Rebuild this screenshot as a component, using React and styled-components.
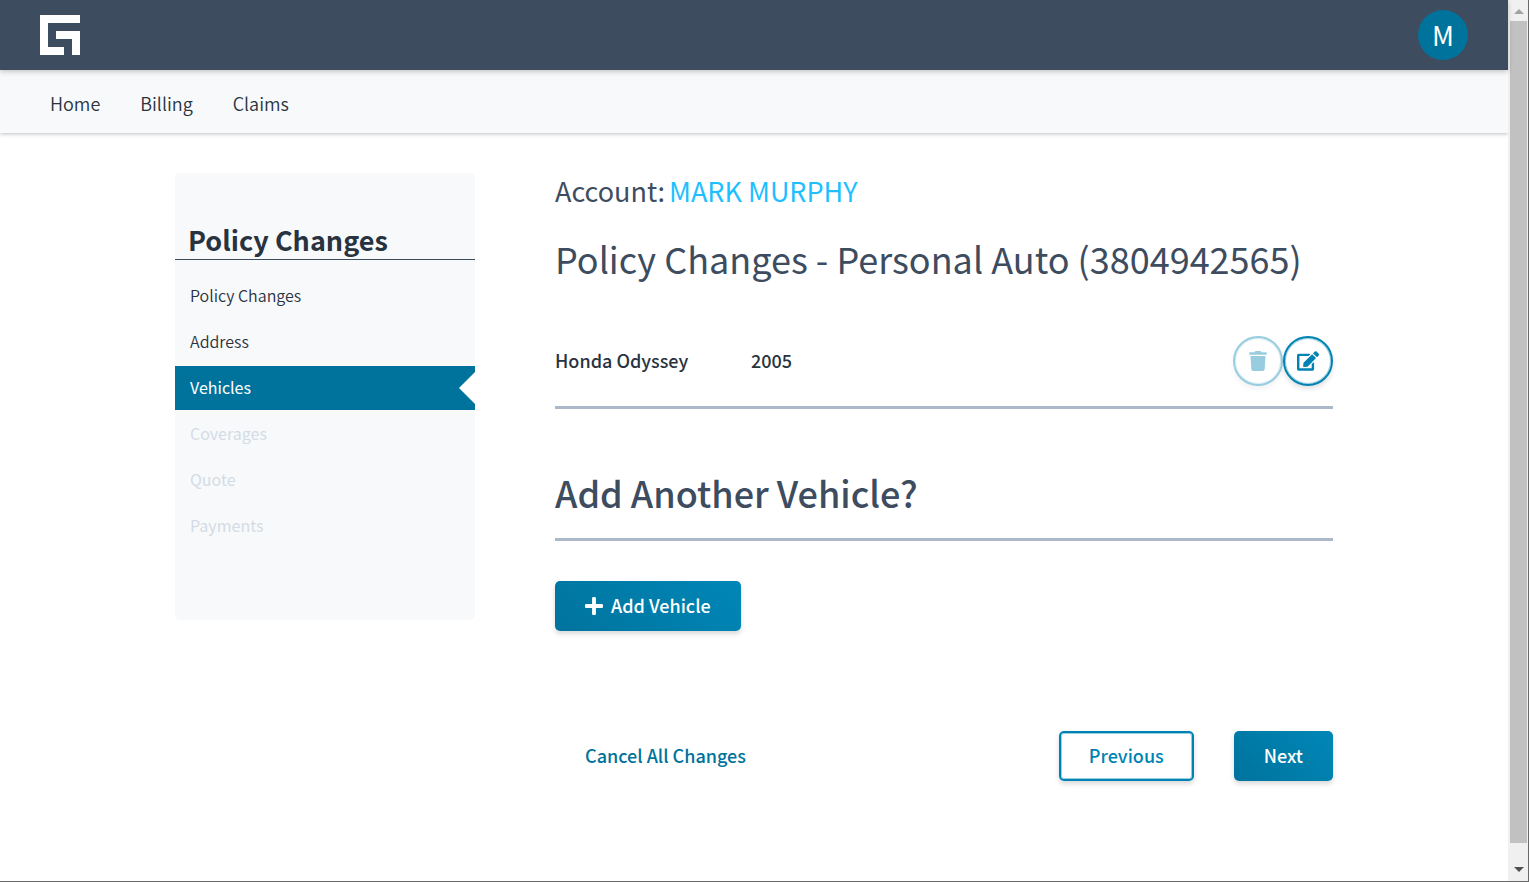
import React from "react";
import styled, { createGlobalStyle, css } from "styled-components";
import { FaEdit, FaPlus, FaTrash } from "react-icons/fa";

const GlobalStyle = createGlobalStyle`
  *, *::before, *::after { box-sizing: border-box; }
  body {
    margin: 0;
    background: #fff;
    color: #28333f;
    font-family: "Noto Sans CJK SC", "Source Sans Pro", "Open Sans", sans-serif;
    font-size: 18px;
    line-height: 24px;
  }
  h1, h2, p, ul { margin: 0; padding: 0; }
  button { font: inherit; cursor: pointer; }
`;

const Window = styled.div`
  display: flex;
  min-height: 100vh;
  border-right: 1px solid #696969;
  border-bottom: 1px solid #696969;
`;

const Page = styled.div`
  flex: 1;
  min-width: 0;
`;

const Header = styled.header`
  position: relative;
  z-index: 2;
  display: flex;
  align-items: center;
  justify-content: space-between;
  height: 70px;
  padding: 0 40px;
  background: #3d4c5f;
  box-shadow: 0 2px 5px rgba(0, 0, 0, 0.2);
`;

const LogoLink = styled.a`
  display: block;
  height: 40px;
`;

const Avatar = styled.button`
  width: 50px;
  height: 50px;
  padding: 0;
  border: 0;
  border-radius: 50%;
  background: #00739d;
  color: #fff;
  font-size: 27px;
  line-height: 50px;
`;

const Nav = styled.nav`
  display: flex;
  align-items: center;
  gap: 40px;
  height: 63px;
  padding: 3px 50px 0;
  background: #f8f9fb;
  box-shadow: 0 1px 4px rgba(0, 0, 0, 0.25);
`;

const NavLink = styled.a`
  color: #28333f;
  font-weight: 350;
  text-decoration: none;
`;

const Main = styled.main`
  display: flex;
  align-items: flex-start;
  gap: 80px;
  width: 100%;
  max-width: 1508px;
  margin: 0 auto;
  padding: 40px 175px;
`;

const Sidebar = styled.aside`
  flex: 0 0 300px;
  padding: 48px 0 72px;
  border-radius: 5px;
  background: #f8f9fb;
`;

const SidebarTitle = styled.h2`
  margin-bottom: 14px;
  padding: 0 13px;
  border-bottom: 1px solid #3d4c5f;
  font-size: 27px;
  font-weight: 700;
  line-height: 38px;
`;

const Steps = styled.ul`
  display: flex;
  flex-direction: column;
  gap: 2px;
  list-style: none;
`;

const Step = styled.button`
  display: block;
  position: relative;
  width: 100%;
  height: 44px;
  padding: 0 15px 2px;
  border: 0;
  background: none;
  color: #28333f;
  font-size: 16px;
  font-weight: 350;
  text-align: left;

  &:disabled {
    color: #d3dce5;
    font-weight: 400;
    cursor: default;
  }

  ${({ $active }) =>
    $active &&
    css`
      background: #00739d;
      color: #fff;
      font-weight: 400;

      &::after {
        content: "";
        position: absolute;
        top: 6px;
        right: 0;
        border: 16px solid transparent;
        border-left-width: 0;
        border-right-color: #fff;
      }
    `}
`;

const Content = styled.div`
  flex: 1;
  min-width: 0;
  color: #3d4c5f;
`;

const Account = styled.p`
  display: flex;
  gap: 4px;
  font-size: 27px;
  line-height: 36px;

  a {
    color: #1fbfff;
    text-decoration: none;
  }
`;

const PageTitle = styled.h1`
  margin-top: 24px;
  font-size: 36px;
  font-weight: 400;
  line-height: 50px;
`;

const VehicleRow = styled.div`
  display: flex;
  align-items: center;
  margin-top: 53px;
  padding-bottom: 20px;
  border-bottom: 3px solid #abb8ca;
  color: #28333f;
  font-weight: 500;
`;

const VehicleText = styled.span`
  min-width: 196px;
  padding-bottom: 2px;
`;

const RowActions = styled.div`
  display: flex;
  margin-left: auto;
`;

const IconButton = styled.button`
  display: grid;
  place-items: center;
  width: 50px;
  height: 50px;
  padding: 0;
  border: 2px solid #0083b3;
  border-radius: 50%;
  background: #fff;
  color: #0083b3;
  box-shadow: 0 3px 5px rgba(0, 0, 0, 0.12), inset 0 0 0 1px rgba(0, 131, 179, 0.4);

  &:disabled {
    opacity: 0.4;
    cursor: default;
  }
`;

const SectionTitle = styled.h2`
  margin-top: 58px;
  padding-bottom: 21px;
  border-bottom: 3px solid #abb8ca;
  font-size: 36px;
  font-weight: 500;
  line-height: 50px;
`;

const Button = styled.button`
  display: inline-flex;
  align-items: center;
  gap: 8px;
  height: 50px;
  padding: 0 30px;
  border: 0;
  border-radius: 5px;
  font-weight: 500;
  white-space: nowrap;

  span {
    padding-bottom: 2px;
  }

  ${({ $kind }) =>
    $kind === "primary" &&
    css`
      background: linear-gradient(45deg, #00739d, #0087b7);
      color: #fff;
      box-shadow: 0 3px 5px rgba(0, 0, 0, 0.15);
    `}

  ${({ $kind }) =>
    $kind === "outline" &&
    css`
      padding: 0 28px;
      border: 2px solid #0083b3;
      background: #fff;
      color: #0083b3;
      box-shadow: 0 3px 5px rgba(0, 0, 0, 0.15), inset 0 0 0 1px rgba(0, 131, 179, 0.4);
    `}

  ${({ $kind }) =>
    $kind === "text" &&
    css`
      background: none;
      color: #00739d;
    `}
`;

const PlusIcon = styled(FaPlus)`
  width: 18px;
  height: 22px;
`;

const AddArea = styled.div`
  margin-top: 40px;
`;

const Footer = styled.footer`
  display: flex;
  justify-content: space-between;
  margin-top: 100px;
`;

const FooterGroup = styled.div`
  display: flex;
  gap: 40px;
`;

const ScrollBar = styled.div`
  display: flex;
  flex: 0 0 20px;
  flex-direction: column;
  align-items: center;
  background: #f0f0f0;
`;

const ScrollArrow = styled.svg`
  display: block;
  width: 17px;
  height: 21px;
`;

const ScrollThumb = styled.div`
  width: 17px;
  flex: 1;
  margin: 0 0 17px 1px;
  background: #c1c1c1;
`;

const steps = [
  { label: "Policy Changes" },
  { label: "Address" },
  { label: "Vehicles", active: true },
  { label: "Coverages", disabled: true },
  { label: "Quote", disabled: true },
  { label: "Payments", disabled: true },
];

function Logo() {
  return (
    <svg width="40" height="40" viewBox="0 0 40 40" fill="#fff" aria-hidden="true">
      <path d="M0 0H40V8H8V32H24V40H0Z" />
      <path d="M16 16H40V40H32V24H16Z" />
    </svg>
  );
}

export default function App() {
  return (
    <>
      <GlobalStyle />
      <Window>
        <Page>
          <Header>
            <LogoLink href="#" aria-label="Home page">
              <Logo />
            </LogoLink>
            <Avatar type="button">M</Avatar>
          </Header>
          <Nav>
            <NavLink href="#">Home</NavLink>
            <NavLink href="#">Billing</NavLink>
            <NavLink href="#">Claims</NavLink>
          </Nav>
          <Main>
            <Sidebar>
              <SidebarTitle>Policy Changes</SidebarTitle>
              <Steps>
                {steps.map((s) => (
                  <li key={s.label}>
                    <Step type="button" $active={s.active} disabled={s.disabled}>
                      {s.label}
                    </Step>
                  </li>
                ))}
              </Steps>
            </Sidebar>
            <Content>
              <Account>
                <span>Account:</span>
                <a href="#">MARK MURPHY</a>
              </Account>
              <PageTitle>Policy Changes - Personal Auto (3804942565)</PageTitle>
              <VehicleRow>
                <VehicleText>Honda Odyssey</VehicleText>
                <VehicleText>2005</VehicleText>
                <RowActions>
                  <IconButton type="button" aria-label="Delete vehicle" disabled>
                    <FaTrash size={20} />
                  </IconButton>
                  <IconButton type="button" aria-label="Edit vehicle">
                    <FaEdit size={22} />
                  </IconButton>
                </RowActions>
              </VehicleRow>
              <SectionTitle>Add Another Vehicle?</SectionTitle>
              <AddArea>
                <Button type="button" $kind="primary">
                  <PlusIcon />
                  <span>Add Vehicle</span>
                </Button>
              </AddArea>
              <Footer>
                <Button type="button" $kind="text">
                  <span>Cancel All Changes</span>
                </Button>
                <FooterGroup>
                  <Button type="button" $kind="outline">
                    <span>Previous</span>
                  </Button>
                  <Button type="button" $kind="primary">
                    <span>Next</span>
                  </Button>
                </FooterGroup>
              </Footer>
            </Content>
          </Main>
        </Page>
        <ScrollBar aria-hidden="true">
          <ScrollArrow viewBox="0 0 17 21" fill="#a3a3a3">
            <path d="M4 14H14L9 9Z" />
          </ScrollArrow>
          <ScrollThumb />
          <ScrollArrow viewBox="0 0 17 21" fill="#505050">
            <path d="M4 7H14L9 12Z" />
          </ScrollArrow>
        </ScrollBar>
      </Window>
    </>
  );
}
